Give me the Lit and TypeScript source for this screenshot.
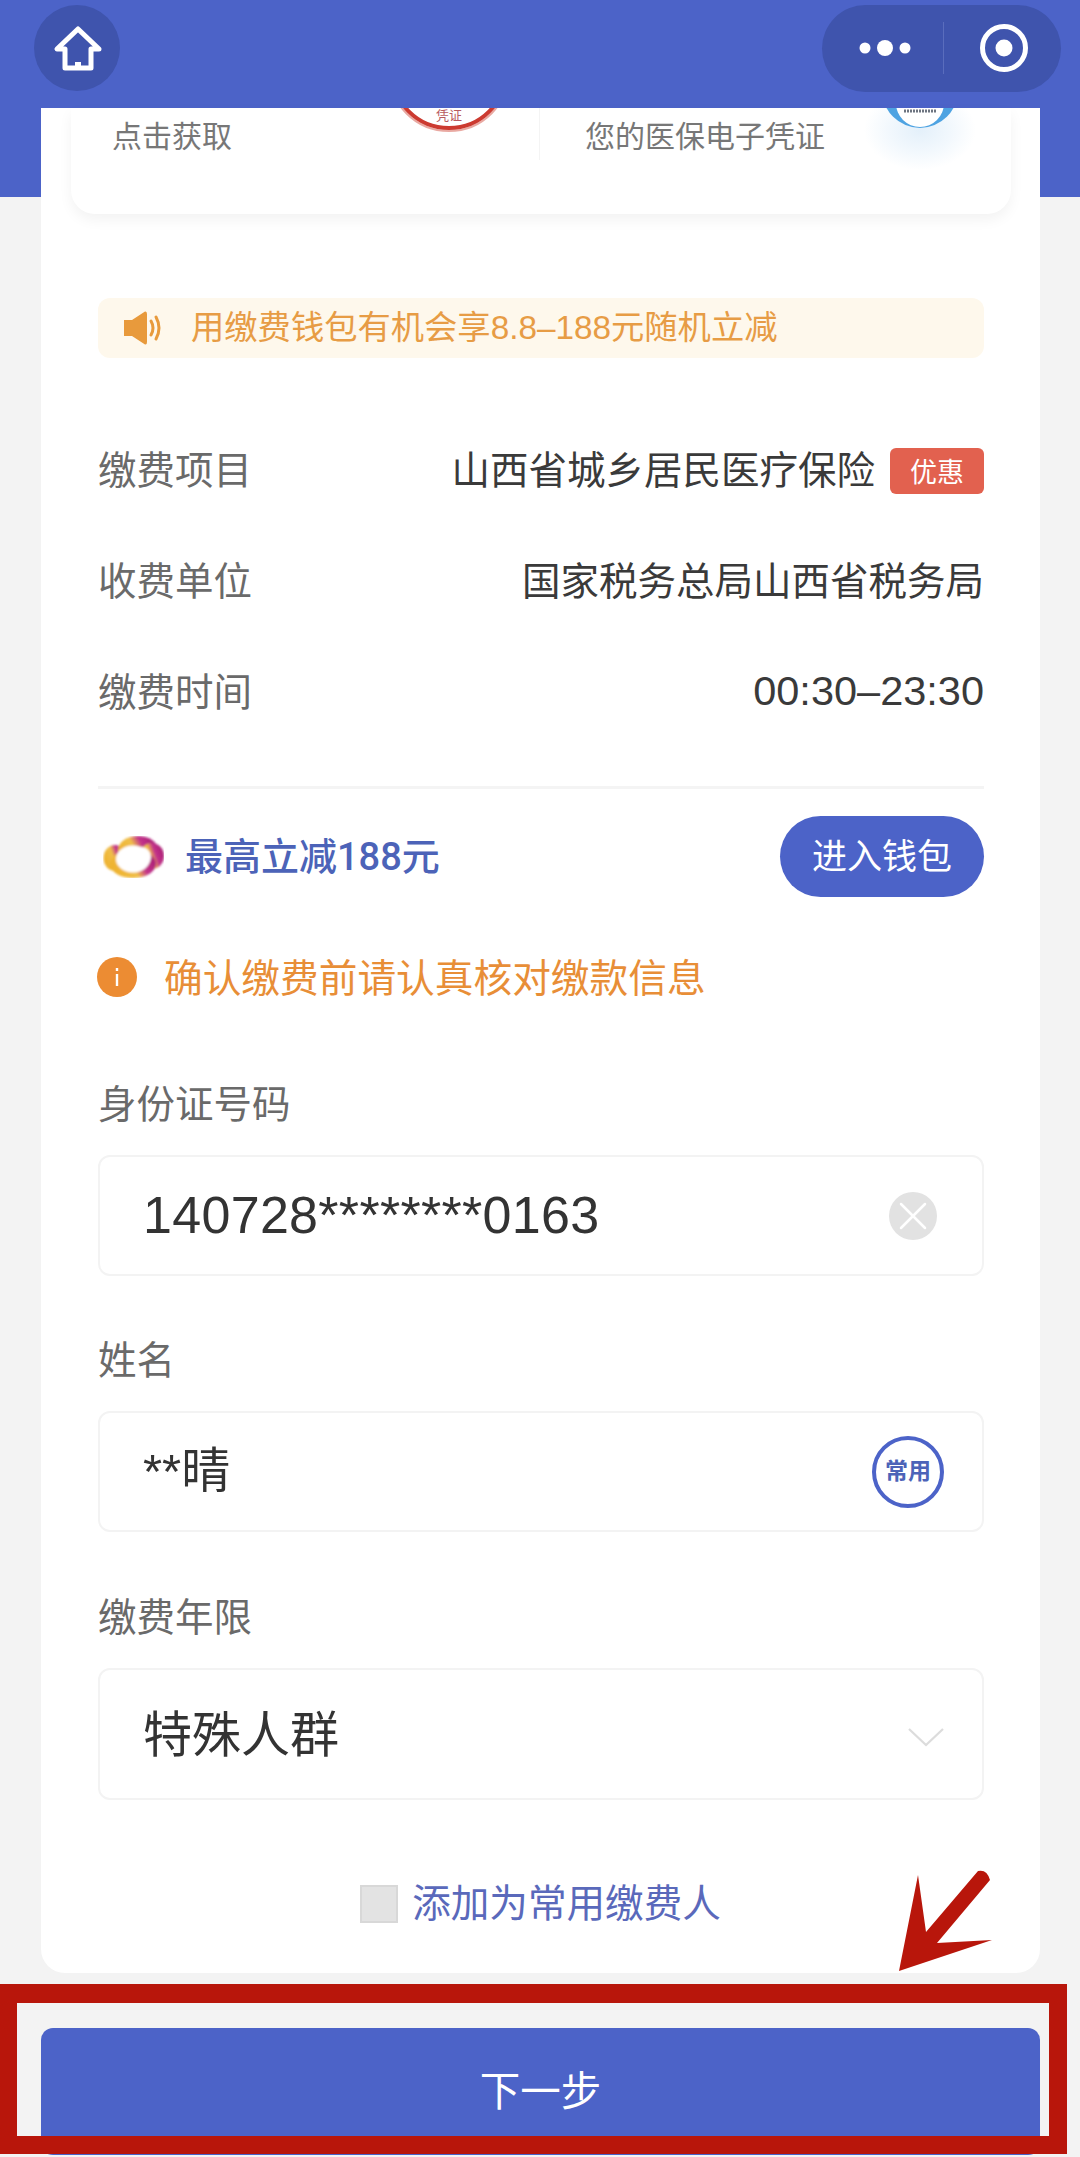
import { LitElement, html, css, svg } from "lit";
import { customElement } from "lit/decorators.js";

const homeIcon = svg`<svg class="ico" viewBox="34 5 86 86" width="86" height="86">
  <path d="M78 29 L57 49 H65 V68 H91 V49 H99 Z" fill="none" stroke="#fff" stroke-width="5" stroke-linejoin="round"/>
  <path d="M75 68 V62 H81 V68" fill="#fff"/></svg>`;

const targetIcon = svg`<svg class="ico" viewBox="0 0 50 50" width="50" height="50">
  <circle cx="25" cy="25" r="21.5" fill="none" stroke="#fff" stroke-width="5"/><circle cx="25" cy="25" r="8.5" fill="#fff"/></svg>`;

const dotsIcon = svg`<svg class="ico" viewBox="0 0 54 18" width="54" height="18">
  <circle cx="7" cy="9" r="5.5" fill="#fff"/><circle cx="27" cy="9" r="8" fill="#fff"/><circle cx="47" cy="9" r="5.5" fill="#fff"/></svg>`;

const speakerIcon = svg`<svg class="ico" viewBox="0 0 40 34" width="40" height="34">
  <path d="M0 9 H8 L21 0.5 Q23 0 23 3 V31 Q23 34 21 33.5 L8 25 H0 Z" fill="#e89a3c"/>
  <path d="M27 10 Q31 17 27 24 M32 6 Q38 17 32 28" fill="none" stroke="#e89a3c" stroke-width="3" stroke-linecap="round"/></svg>`;

const logoIcon = svg`<svg class="ico" viewBox="0 0 61 42" width="61" height="42">
  <defs>
    <linearGradient id="lg" x1="0" y1="0.7" x2="1" y2="0.3">
      <stop offset="0" stop-color="#eeb02a"/><stop offset="0.45" stop-color="#f0bf4a"/>
      <stop offset="0.66" stop-color="#c3328b"/><stop offset="1" stop-color="#a81f73"/>
    </linearGradient>
    <filter id="bl" x="-10%" y="-10%" width="120%" height="120%"><feGaussianBlur stdDeviation="0.8"/></filter>
  </defs>
  <g filter="url(#bl)">
    <g fill="url(#lg)">
      <ellipse cx="12" cy="22" rx="11.5" ry="13"/><ellipse cx="35" cy="14" rx="20" ry="14"/>
      <ellipse cx="49" cy="20" rx="12" ry="13"/><ellipse cx="30" cy="28" rx="23" ry="14"/>
    </g>
    <ellipse cx="30" cy="23" rx="17" ry="13.5" fill="#fff"/>
    <ellipse cx="38" cy="21" rx="10" ry="10" fill="#fff"/>
  </g></svg>`;

const clearIcon = svg`<svg class="ico" viewBox="0 0 48 48" width="48" height="48">
  <circle cx="24" cy="24" r="24" fill="#e2e2e2"/>
  <path d="M12 12 L36 36 M36 12 L12 36" stroke="#fff" stroke-width="2.5" stroke-linecap="round"/></svg>`;

const chevronIcon = svg`<svg class="ico" viewBox="0 0 36 20" width="36" height="20">
  <path d="M1 2 L18 18 L35 2" fill="none" stroke="#dcdcdc" stroke-width="2.2"/></svg>`;

const infoIcon = svg`<svg class="ico" viewBox="0 0 40 40" width="40" height="40">
  <circle cx="20" cy="20" r="20" fill="#ec8c33"/>
  <rect x="18.8" y="11" width="2.4" height="3" fill="#fff"/><rect x="18.8" y="17" width="2.4" height="12" fill="#fff"/></svg>`;

const redStamp = svg`<svg class="stamp-red" viewBox="0 0 130 30" width="130" height="30">
  <circle cx="65" cy="-37" r="60" fill="#fff" stroke="#e9a9a2" stroke-width="2"/>
  <circle cx="65" cy="-37" r="57" fill="#fff" stroke="#cc3a30" stroke-width="4"/></svg>`;

const blueStamp = svg`<svg class="stamp-blue" viewBox="0 0 120 70" width="120" height="70">
  <defs><radialGradient id="gl"><stop offset="0" stop-color="#e4f0fa"/><stop offset="0.55" stop-color="#f2f8fd"/><stop offset="1" stop-color="#fff"/></radialGradient></defs>
  <ellipse cx="60" cy="22" rx="56" ry="40" fill="url(#gl)"/>
  <circle cx="60" cy="-18" r="38" fill="#4ea3e2"/>
  <circle cx="60" cy="-5" r="24" fill="#fff"/>
  <line x1="44" y1="3" x2="76" y2="3" stroke="#6d7480" stroke-width="3" stroke-dasharray="2 1"/></svg>`;

const annotationArrow = svg`<svg class="arrow" viewBox="0 0 110 120" width="110" height="120">
  <path d="M4 107 L23 11 L31 68 L83 7 Q92 5 95 16 L42 79 L97 76 Z" fill="#b8160b"/></svg>`;

@customElement("app-root")
export class AppRoot extends LitElement {
  static styles = css`
    :host {
      display: block;
      position: relative;
      width: 1080px;
      height: 2157px;
      overflow: hidden;
      background: linear-gradient(#4c63c8 0 197px, #f3f3f3 197px);
      font-family: "Liberation Sans", "Noto Sans CJK SC", sans-serif;
      color: #333;
    }
    .ico { display: block; flex: none; }
    .nav {
      height: 96px;
      padding: 0 19px 12px 34px;
      display: flex;
      align-items: center;
      justify-content: space-between;
    }
    .home { width: 86px; height: 86px; border-radius: 50%; background: #3f54ad; }
    .capsule {
      width: 239px; height: 87px; border-radius: 44px; background: #3f54ad;
      display: flex; align-items: center;
    }
    .capsule .dots { width: 121px; display: flex; justify-content: flex-end; padding-right: 31px; box-sizing: border-box; flex: none; }
    .capsule .sep { width: 1px; height: 52px; background: #5a6dbd; flex: none; }
    .capsule .target { margin-left: 35px; }

    .card {
      margin: 0 40px 0 41px;
      height: 1865px;
      padding: 0 56px 0 57px;
      box-sizing: border-box;
      background: #fff;
      border-radius: 0 0 24px 24px;
    }
    .promo {
      position: relative;
      margin: 0 -27px;
      height: 106px;
      overflow: hidden;
      border-radius: 0 0 24px 24px;
      box-shadow: 0 6px 14px rgba(0,0,0,0.05);
      background: #fff;
      display: flex;
    }
    .promo-cell { display: flex; height: 52px; align-items: center; font-size: 30px; color: #777; }
    .promo-a { width: 468px; padding-left: 41px; box-sizing: border-box; }
    .promo-b { flex: 1; padding-left: 45px; border-left: 1px solid #f4f4f4; }
    .stamp-red { position: absolute; left: 313px; top: 0; }
    .stamp-red-text { position: absolute; left: 365px; top: 1px; font-size: 13px; line-height: 13px; color: #b85a60; }
    .stamp-blue { position: absolute; left: 789px; top: 0; }

    .notice {
      margin-top: 84px;
      height: 60px;
      border-radius: 12px;
      background: #fef8ec;
      display: flex;
      align-items: center;
      padding-left: 26px;
      font-size: 33.3px;
      color: #e79c45;
    }
    .notice .txt { margin-left: 27px; padding-bottom: 8px; }

    .rows { margin-top: 57px; }
    .row {
      height: 111px;
      display: flex;
      align-items: center;
      justify-content: space-between;
      font-size: 38.5px;
    }
    .row .k { color: #6a6a6a; padding-bottom: 8px; }
    .row .v { display: flex; align-items: center; gap: 15px; color: #3a3a3a; }
    .row .vt { padding-bottom: 8px; }
    .row .time { font-size: 41.5px; padding-bottom: 3px; }
    .badge {
      width: 94px; height: 46px; border-radius: 6px; background: #e2614f; color: #fff;
      font-size: 27px; display: flex; align-items: center; justify-content: center;
    }
    .divider { margin-top: 38px; height: 3px; background: #f4f4f4; }
    .wallet {
      margin-top: 27px;
      height: 81px;
      display: flex;
      align-items: center;
      justify-content: space-between;
    }
    .wallet-l {
      display: flex; align-items: center; gap: 21px; margin-left: 5px;
      font-family: Roboto, "Noto Sans CJK SC", sans-serif;
      font-size: 38px; font-weight: 500; color: #4c63b8;
    }
    .wallet-l span { padding-bottom: 6px; }
    .wallet-btn {
      width: 204px; height: 81px; border-radius: 41px; background: #4c63c8; color: #fff;
      font-size: 35px; display: flex; align-items: center; justify-content: center;
      box-sizing: border-box; padding-bottom: 7px;
    }
    .warn {
      margin-top: 60px;
      height: 40px;
      display: flex;
      align-items: center;
      gap: 27px;
      margin-left: -1px;
      font-size: 38.7px;
      color: #e88e37;
    }
    .warn span { padding-bottom: 5px; }
    .field-l { height: 60px; box-sizing: border-box; padding-bottom: 8px; display: flex; align-items: center; font-size: 38.5px; color: #6a6a6a; }
    .first { margin-top: 78px; }
    .next { margin-top: 55px; }
    .next2 { margin-top: 56px; }
    .input {
      margin-top: 20px;
      height: 121px;
      box-sizing: border-box;
      border: 2px solid #f3f3f3;
      border-radius: 12px;
      display: flex;
      align-items: center;
      justify-content: space-between;
      padding: 0 38px 0 43px;
      font-size: 49px;
      color: #333;
    }
    .input span { padding-bottom: 10px; }
    .input.tall { height: 132px; padding-top: 6px; }
    .input.tall span { padding-bottom: 14px; }
    .input.num { font-size: 52px; padding-right: 45px; letter-spacing: 0.3px; }
    .input.num span { padding-bottom: 2px; }
    .regular { width: 72px; height: 72px; box-sizing: border-box; border: 4px solid #4c63c8; border-radius: 50%;
      color: #4c63b8; font-size: 23px; font-weight: 700; display: flex; align-items: center; justify-content: center; white-space: nowrap; padding-bottom: 5px; }
    .check {
      margin-top: 84px;
      height: 40px;
      display: flex;
      align-items: center;
      justify-content: center;
      gap: 14px;
      font-size: 38.6px;
      color: #5a69bb;
      padding-right: 1px;
    }
    .check span:last-child { padding-bottom: 8px; }
    .box { width: 38px; height: 38px; box-sizing: border-box; background: #e3e3e3; border: 2px solid #d8d8d8; }
    .submit {
      margin: 55px 40px 0 41px;
      height: 127px;
      box-sizing: border-box;
      padding-bottom: 6px;
      border-radius: 12px;
      background: #4c63c8;
      color: #fff;
      font-size: 40.5px;
      display: flex;
      align-items: center;
      justify-content: center;
    }
    .frame {
      position: absolute;
      left: 0; top: 1984px;
      width: 1067px; height: 170px;
      box-sizing: border-box;
      border: solid #b8160b;
      border-width: 19px 18px 18px 17px;
    }
    .arrow { position: absolute; left: 895px; top: 1864px; }
  `;

  private field(label: string, body: unknown, cls: string) {
    return html`<div class="field ${cls}"><div class="field-l">${label}</div>${body}</div>`;
  }

  render() {
    return html`
      <div class="nav">
        <div class="home">${homeIcon}</div>
        <div class="capsule">
          <div class="dots">${dotsIcon}</div>
          <div class="sep"></div>
          <div class="target">${targetIcon}</div>
        </div>
      </div>
      <div class="card">
        <div class="promo">
          <div class="promo-cell promo-a">点击获取</div>
          <div class="promo-cell promo-b">您的医保电子凭证</div>
          ${redStamp}
          <div class="stamp-red-text">凭证</div>
          ${blueStamp}
        </div>
        <div class="notice">${speakerIcon}<span class="txt">用缴费钱包有机会享8.8–188元随机立减</span></div>
        <div class="rows">
          <div class="row"><span class="k">缴费项目</span><span class="v"><span class="vt">山西省城乡居民医疗保险</span><span class="badge">优惠</span></span></div>
          <div class="row"><span class="k">收费单位</span><span class="v"><span class="vt">国家税务总局山西省税务局</span></span></div>
          <div class="row"><span class="k">缴费时间</span><span class="v time">00:30–23:30</span></div>
        </div>
        <div class="divider"></div>
        <div class="wallet">
          <div class="wallet-l">${logoIcon}<span>最高立减188元</span></div>
          <div class="wallet-btn">进入钱包</div>
        </div>
        <div class="warn">${infoIcon}<span>确认缴费前请认真核对缴款信息</span></div>
        ${this.field("身份证号码", html`<div class="input num"><span>140728********0163</span>${clearIcon}</div>`, "first")}
        ${this.field("姓名", html`<div class="input"><span>**晴</span><div class="regular">常用</div></div>`, "next")}
        ${this.field("缴费年限", html`<div class="input tall"><span>特殊人群</span>${chevronIcon}</div>`, "next2")}
        <div class="check"><span class="box"></span><span>添加为常用缴费人</span></div>
      </div>
      <div class="submit">下一步</div>
      <div class="frame"></div>
      ${annotationArrow}
    `;
  }
}
